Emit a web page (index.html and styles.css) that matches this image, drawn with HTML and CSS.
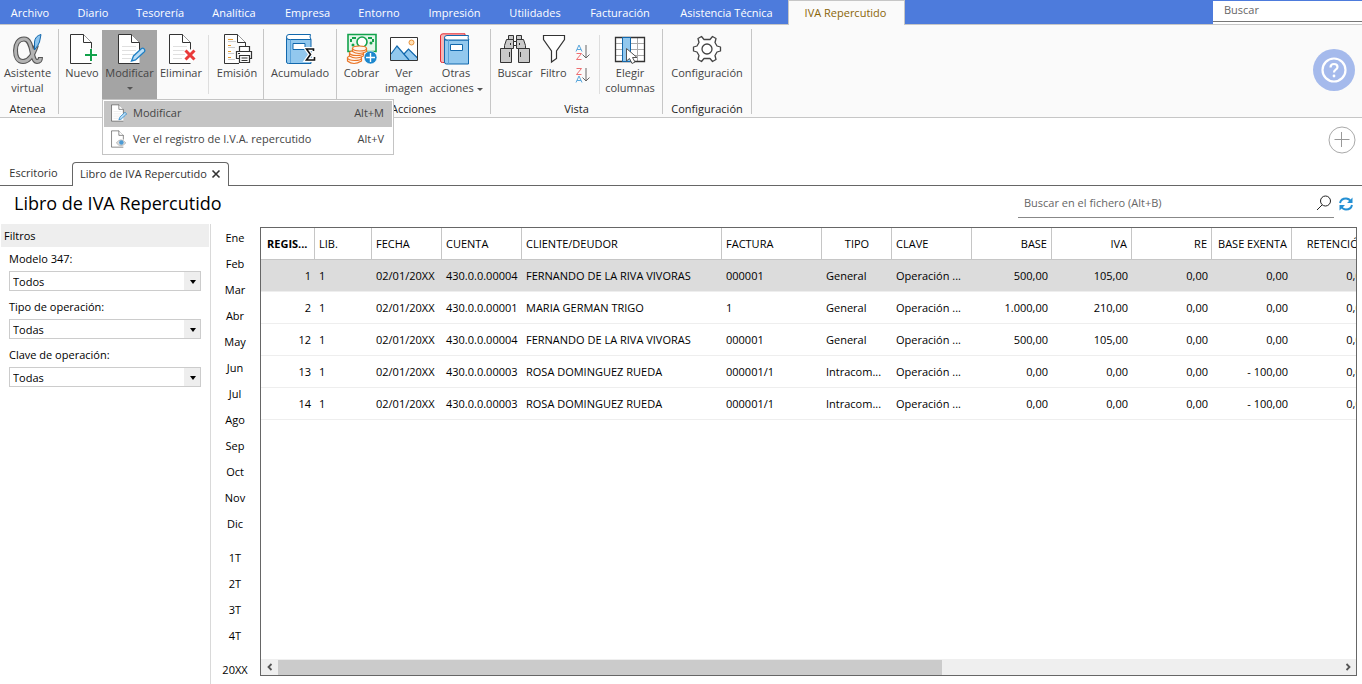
FILE: index.html
```html
<!DOCTYPE html>
<html lang="es">
<head>
<meta charset="utf-8">
<title>Libro de IVA Repercutido</title>
<link rel="stylesheet" href="styles.css">
</head>
<body>
<svg class="defs" aria-hidden="true">
  <symbol id="page" viewBox="0 0 32 32"><path d="M4.500 1.500H17.500L25.500 9.500V30.500H4.500Z" fill="#fff"/><path d="M25.500 17V9.500L17.500 1.500H4.500V30.500H25.500" fill="none" stroke="#333"/><path d="M17.500 1.500V9.500H25.500" fill="#fff" stroke="#333"/></symbol>
  <symbol id="lines" viewBox="0 0 32 32"><path d="M8 13.500H22M8 17.500H22M8 21.500H20M8 25.500H17" stroke="#e0e0e0"/></symbol>
  <symbol id="pen" viewBox="0 0 32 32"><path d="M17.500 28l2-5 8-7.500q2-1 3 1t-1 3l-8 7.500z" fill="#b9dcf5" stroke="#1d7fc4" stroke-width="1.300"/></symbol>
</svg>
<header>
  <nav class="tabs" aria-label="Cinta">
    <button>Archivo</button><button>Diario</button><button>Tesorería</button><button>Analítica</button><button>Empresa</button><button>Entorno</button><button>Impresión</button><button>Utilidades</button><button>Facturación</button><button>Asistencia Técnica</button><button class="active">IVA Repercutido</button>
    <input class="top-search" type="search" placeholder="Buscar" aria-label="Buscar">
  </nav>
  <div class="ribbon">
    <section class="group g-atenea">
      <div class="tools">
        <button class="tool"><svg viewBox="0 0 32 32"><g fill="none"><path d="M24.500 12C21 23 17 28.500 11 28.500C6 28.500 3.500 24 3.500 17.500S6.500 6 12 6C18 6 19 14 20.500 21Q22 28.500 25 28.500Q28.500 28.500 28.500 24" stroke="#555" stroke-width="5"/><path d="M24.500 12C21 23 17 28.500 11 28.500C6 28.500 3.500 24 3.500 17.500S6.500 6 12 6C18 6 19 14 20.500 21Q22 28.500 25 28.500Q28.500 28.500 28.500 25" stroke="#b3b3b3" stroke-width="2.800"/></g><path d="M22.500 17V9Q23 3 29 1.500L27.500 9Q26.500 12 22.500 17z" fill="#8cc4ee" stroke="#1268ad"/></svg><span>Asistente virtual</span></button>
      </div>
      <h2>Atenea</h2>
    </section>
    <section class="group g-edit">
      <div class="tools">
        <button class="tool"><svg viewBox="0 0 32 32"><use href="#page"/><path d="M18 22H31M25 15.500V28.500" stroke="#fff" stroke-width="4"/><path d="M19 22H31M25 16V28" stroke="#12a24b" stroke-width="2"/></svg><span>Nuevo</span></button>
        <div class="drop">
          <button class="tool pressed" aria-expanded="true"><svg viewBox="0 0 32 32"><use href="#page"/><use href="#lines"/><use href="#pen"/></svg><span>Modificar</span><i class="caret"></i></button>
          <div class="menu" role="menu">
            <button role="menuitem" class="current"><svg viewBox="0 0 32 32"><use href="#page"/><use href="#lines"/><use href="#pen"/></svg><span>Modificar</span><kbd>Alt+M</kbd></button>
            <button role="menuitem"><svg viewBox="0 0 32 32"><use href="#page"/><path d="M13 23q8-11 17 0-9 10-17 0z" fill="#ddd" stroke="#999"/><circle cx="22" cy="22" r="4" fill="#4c9bd5"/></svg><span>Ver el registro de I.V.A. repercutido</span><kbd>Alt+V</kbd></button>
          </div>
        </div>
        <button class="tool"><svg viewBox="0 0 32 32"><use href="#page"/><use href="#lines"/><path d="M20 17l9 10M29 17l-9 10" stroke="#fff" stroke-width="6"/><path d="M20.500 17.500l9 9M29.500 17.500l-9 9" stroke="#e93a3a" stroke-width="3"/></svg><span>Eliminar</span></button>
        <i class="rule"></i>
        <button class="tool"><svg viewBox="0 0 32 32"><path d="M3.500 1.500H16.500L24.500 9.500V13M3.500 1.500V30.500H18" fill="#fff" stroke="#333"/><path d="M16.500 1.500V9.500H24.500" fill="#fff" stroke="#333"/><path d="M7 6.500h5M7 12.500h3M7 18.500h3M7 24.500h3" stroke="#e69a2e"/><path d="M7 8.500h8M7 14.500h7M7 20.500h6M7 26.500h7" stroke="#ccc"/><g fill="#fff" stroke="#333" stroke-width="1.200"><path d="M18.500 18v-4.500h10V18"/><path d="M15.500 18.500h15v7h-15z"/><path d="M18.500 22.500h10v7h-10z"/><path d="M20.500 25h6M20.500 27.500h6M17 20.500h2"/></g></svg><span>Emisión</span></button>
      </div>
    </section>
    <section class="group g-sum">
      <div class="tools">
        <button class="tool"><svg viewBox="0 0 32 32"><path d="M2.500 4V29q0 1.500 2 1.500H27V6.500H4Z" fill="#92c8ee" stroke="#1268ad"/><path d="M26.500 1.500H5q-2.500 0-2.500 2.500T5 6.500H27l-1-2.500z" fill="#fff" stroke="#1268ad"/><path d="M6.500 6.500V30" stroke="#5ba3da"/><path d="M9 10.500H21V16.500H9z" fill="#fff" stroke="#1268ad"/><path d="M29.500 18V16H22.500l4 5.500-4 5.500h8v-3" fill="none" stroke="#fff" stroke-width="4"/><path d="M29.500 18V16H22.500l4 5.500-4 5.500h8v-3" fill="none" stroke="#111" stroke-width="1.600"/></svg><span>Acumulado</span></button>
      </div>
    </section>
    <section class="group g-actions">
      <div class="tools">
        <button class="tool"><svg viewBox="0 0 32 32"><path d="M2 1.500H30V18.500H2z" fill="#e5f6ea" stroke="#12a24b" stroke-width="1.600"/><path d="M6 5h4M5 6v3M22 5h4M27 6v3" stroke="#12a24b" stroke-width="2"/><circle cx="16" cy="9" r="5" fill="#fff" stroke="#12a24b" stroke-width="1.600"/><circle cx="7" cy="12" r="1.500" fill="#12a24b"/><circle cx="25" cy="10" r="1.500" fill="#12a24b"/><g fill="#fff4ec" stroke="#ea7527" stroke-width="1.200"><path d="M1.500 25v3q6 5 14 0v-3z"/><ellipse cx="8.500" cy="25" rx="7" ry="2.500"/><path d="M3.500 20v3q6 4 14 0v-3z"/><ellipse cx="10.500" cy="20" rx="7" ry="2.500"/><path d="M6.500 15.500v3q6 4 14 0v-3z"/><ellipse cx="13.500" cy="15.500" rx="7" ry="2.500"/></g><circle cx="24.500" cy="24.500" r="6.500" fill="#1c87cd" stroke="#fff" stroke-width=".6"/><path d="M20 24.500h9M24.500 20v9" stroke="#fff" stroke-width="1.400"/></svg><span>Cobrar</span></button>
        <button class="tool"><svg viewBox="0 0 32 32"><path d="M2.500 4.500H29.500V27.500H2.500z" fill="#fff"/><path d="M3 21l6-8 7 8 4.500-5L29 24v3H3z" fill="#92c8ee"/><path d="M3 21l6-8 12 14M16 21l4.500-5 9 9" fill="none" stroke="#1268ad" stroke-width="1.200"/><circle cx="23.500" cy="9.500" r="2.500" fill="#ffe0b5" stroke="#e8913a"/><path d="M2.500 4.500H29.500V27.500H2.500z" fill="none" stroke="#333"/></svg><span>Ver imagen</span></button>
        <button class="tool"><svg viewBox="0 0 32 32"><path d="M.5 3V28q0 1.500 2 1.500H5V5H25V.8H3Q.5.8.5 3z" fill="#f5b5b5" stroke="#e52e36"/><path d="M4.500 4V29q0 2 2 2H28.500V7H5z" fill="#92c8ee" stroke="#1268ad"/><path d="M28.500 2.500H7Q4.500 2.500 4.500 4.700T7 7H29l-1-2z" fill="#fff" stroke="#1268ad"/><path d="M8.500 7V31" stroke="#5ba3da"/><path d="M10.500 11.500H22.500V17.500H10.500z" fill="#fff" stroke="#1268ad"/></svg><span>Otras acciones <i class="caret"></i></span></button>
      </div>
      <h2>Acciones</h2>
    </section>
    <section class="group g-view">
      <div class="tools">
        <button class="tool"><svg viewBox="0 0 32 32"><g fill="#c9c9c9" stroke="#333"><path d="M9.500 2.500h5v4h-5zM17.500 2.500h5v4h-5z"/><path d="M7.500 6.500h7v9h-9v-3zM17.500 6.500h7l2 6v3h-9z"/><path d="M14.500 8.500h3v4h-3z" fill="#fff"/><path d="M1.500 15.500h11v14H1.500zM19.500 15.500h11v14h-11z"/><path d="M10.500 19v5M21.500 19v5M11.500 10v2M20.500 10v2"/></g></svg><span>Buscar</span></button>
        <button class="tool"><svg viewBox="0 0 32 32"><path d="M5.500 2.500H26.500V6.500L18.500 18V25.500L13.500 29V18L5.500 6.500z" fill="#fff" stroke="#333" stroke-width="1.200"/></svg><span>Filtro</span></button>
        <div class="sorts">
          <button aria-label="Orden ascendente"><svg viewBox="0 0 16 18"><path d="M1 7.500L4 1l3 6.500M2 5.500h4" fill="none" stroke="#5aa7dc"/><path d="M1.500 9.500h5L1.500 15.500h5" fill="none" stroke="#ee6d70"/><path d="M11 1V14M7.500 10.500L11 14l3.500-3.500" fill="none" stroke="#666"/></svg></button>
          <button aria-label="Orden descendente"><svg viewBox="0 0 16 18"><path d="M1.500 1.500h5L1.500 7.500h5" fill="none" stroke="#ee6d70"/><path d="M1 15.500L4 9l3 6.500M2 13.500h4" fill="none" stroke="#5aa7dc"/><path d="M11 1V14M7.500 10.500L11 14l3.500-3.500" fill="none" stroke="#666"/></svg></button>
        </div>
        <i class="rule"></i>
        <button class="tool"><svg viewBox="0 0 32 32"><path d="M1.500 4.500H30.500V28.500H1.500z" fill="#fff"/><path d="M2 10.500H30M2 16.500H30M2 22.500H30M16.500 5V28M23.500 5V28" stroke="#aaa"/><path d="M1.500 4.500H30.500V28.500H1.500z" fill="none" stroke="#333" stroke-width="1.300"/><path d="M8.500 4.500h8v24h-8z" fill="#92c8ee" stroke="#1268ad"/><path d="M12.500 15.500V28l3-2.500 2.500 5 3-1.500-2.500-4.500h4.500z" fill="#fff" stroke="#555"/></svg><span>Elegir columnas</span></button>
      </div>
      <h2>Vista</h2>
    </section>
    <section class="group g-config">
      <div class="tools">
        <button class="tool"><svg viewBox="0 0 32 32"><g fill="#fff" stroke="#444" stroke-width="1.300" stroke-linejoin="round"><path d="M13 6.500L10.500 3.500 7 5.500 8 9.500 6 13 2.500 14v4L6 19 8 22.500 7 26.500l3.500 2L13 25.500h6l2.500 3 3.500-2-1-4L26 19l3.500-1v-4L26 13l-2-3.500 1-4-3.500-2L19 6.500z"/><circle cx="16" cy="16" r="5"/></g></svg><span>Configuración</span></button>
      </div>
      <h2>Configuración</h2>
    </section>
    <button class="help" aria-label="Ayuda"><svg viewBox="0 0 42 42"><circle cx="21" cy="21" r="21" fill="#a5baec"/><circle cx="21" cy="21" r="11.500" fill="none" stroke="#fff" stroke-width="2.200"/><path d="M17.500 18.500q0-3.500 3.500-3.500t3.500 3q0 1.800-2 2.800-1.500 1-1.500 2.700" fill="none" stroke="#fff" stroke-width="2.200"/><circle cx="21" cy="27" r="1.400" fill="#fff"/></svg></button>
  </div>
</header>
<div class="add-row"><button aria-label="Añadir"><svg viewBox="0 0 28 28"><circle cx="14" cy="14" r="13" fill="none" stroke="#aaa"/><path d="M6.500 13.500h15M13.500 6v15" stroke="#999"/></svg></button></div>
<nav class="doc-tabs" aria-label="Documentos">
  <button>Escritorio</button>
  <button class="active">Libro de IVA Repercutido <svg viewBox="0 0 10 10"><path d="M1.500 1.500l7 7M8.500 1.500l-7 7" stroke="#333" stroke-width="1.600"/></svg></button>
</nav>
<div class="title-row">
  <h1>Libro de IVA Repercutido</h1>
  <div class="file-search"><input type="search" placeholder="Buscar en el fichero (Alt+B)" aria-label="Buscar en el fichero"><button aria-label="Buscar"><svg viewBox="0 0 16 16"><circle cx="9.500" cy="6" r="5" fill="none" stroke="#222"/><path d="M6 10L1 15" stroke="#222"/></svg></button></div>
  <button class="refresh" aria-label="Actualizar"><svg viewBox="0 0 16 16"><path d="M2 7q1-4.500 6-4.500 3 0 5 3M14 9q-1 4.500-6 4.500-3 0-5-3" fill="none" stroke="#2590d4" stroke-width="2"/><path d="M14.500 1.500V7H9zM1.500 14.500V9H7z" fill="#2590d4"/></svg></button>
</div>
<main>
  <aside class="filters">
    <h2>Filtros</h2>
    <label for="f1">Modelo 347:</label>
    <div class="pick"><select id="f1"><option>Todos</option></select></div>
    <label for="f2">Tipo de operación:</label>
    <div class="pick"><select id="f2"><option>Todas</option></select></div>
    <label for="f3">Clave de operación:</label>
    <div class="pick"><select id="f3"><option>Todas</option></select></div>
  </aside>
  <nav class="periods" aria-label="Periodo">
    <button>Ene</button><button>Feb</button><button>Mar</button><button>Abr</button><button>May</button><button>Jun</button><button>Jul</button><button>Ago</button><button>Sep</button><button>Oct</button><button>Nov</button><button>Dic</button>
    <button class="first">1T</button><button>2T</button><button>3T</button><button>4T</button>
    <button class="first">20XX</button>
  </nav>
  <div class="grid">
    <div class="viewport">
      <table>
        <colgroup><col class="w54"><col class="w57"><col class="w70"><col class="w80"><col class="w200"><col class="w100"><col class="w70"><col class="w80"><col class="w80"><col class="w80"><col class="w80"><col class="w80"><col class="w80"></colgroup>
        <thead><tr><th class="key">REGIS...</th><th>LIB.</th><th>FECHA</th><th>CUENTA</th><th>CLIENTE/DEUDOR</th><th>FACTURA</th><th class="mid">TIPO</th><th>CLAVE</th><th class="num">BASE</th><th class="num">IVA</th><th class="num">RE</th><th class="num">BASE EXENTA</th><th class="num">RETENCIÓN</th></tr></thead>
        <tbody>
          <tr class="selected"><td class="num">1</td><td>1</td><td>02/01/20XX</td><td>430.0.0.00004</td><td>FERNANDO DE LA RIVA VIVORAS</td><td>000001</td><td>General</td><td>Operación ...</td><td class="num">500,00</td><td class="num">105,00</td><td class="num">0,00</td><td class="num">0,00</td><td class="num">0,00</td></tr>
          <tr><td class="num">2</td><td>1</td><td>02/01/20XX</td><td>430.0.0.00001</td><td>MARIA GERMAN TRIGO</td><td>1</td><td>General</td><td>Operación ...</td><td class="num">1.000,00</td><td class="num">210,00</td><td class="num">0,00</td><td class="num">0,00</td><td class="num">0,00</td></tr>
          <tr><td class="num">12</td><td>1</td><td>02/01/20XX</td><td>430.0.0.00004</td><td>FERNANDO DE LA RIVA VIVORAS</td><td>000001</td><td>General</td><td>Operación ...</td><td class="num">500,00</td><td class="num">105,00</td><td class="num">0,00</td><td class="num">0,00</td><td class="num">0,00</td></tr>
          <tr><td class="num">13</td><td>1</td><td>02/01/20XX</td><td>430.0.0.00003</td><td>ROSA DOMINGUEZ RUEDA</td><td>000001/1</td><td>Intracom...</td><td>Operación ...</td><td class="num">0,00</td><td class="num">0,00</td><td class="num">0,00</td><td class="num">- 100,00</td><td class="num">0,00</td></tr>
          <tr><td class="num">14</td><td>1</td><td>02/01/20XX</td><td>430.0.0.00003</td><td>ROSA DOMINGUEZ RUEDA</td><td>000001/1</td><td>Intracom...</td><td>Operación ...</td><td class="num">0,00</td><td class="num">0,00</td><td class="num">0,00</td><td class="num">- 100,00</td><td class="num">0,00</td></tr>
        </tbody>
      </table>
    </div>
    <div class="scroll">
      <button aria-label="Desplazar a la izquierda"><svg viewBox="0 0 8 8"><path d="M5.500 1L2.500 4l3 3" fill="none" stroke="#555" stroke-width="1.800"/></svg></button>
      <div class="track"><div class="thumb"></div></div>
      <button aria-label="Desplazar a la derecha"><svg viewBox="0 0 8 8"><path d="M2.500 1l3 3-3 3" fill="none" stroke="#555" stroke-width="1.800"/></svg></button>
    </div>
  </div>
</main>
</body>
</html>
```
FILE: styles.css
```css
* { box-sizing: border-box; }
body {
  margin: 0;
  min-height: 100vh;
  display: flex;
  flex-direction: column;
  background: #fff;
  color: #000;
  font: 11px/15px "Open Sans", "Noto Sans", sans-serif;
}
button, input, select { font: inherit; color: inherit; }
button { border: 0; padding: 0; background: none; white-space: nowrap; }
h1, h2 { margin: 0; font-size: 11px; font-weight: 400; }
input { border: 0; outline: 0; min-width: 0; }
svg { display: block; }
.defs { display: none; }

.tabs {
  display: grid;
  grid-template-columns: 63px 60px 74px 74px 73px 70px 81px 80px 90px 123px 117px 1fr;
  height: 25px;
  background: #4d7bdc;
  color: #fff;
  border-bottom: 1px solid #c6c6c6;
}
.tabs button:first-child { padding-right: 3px; }
.tabs button.active {
  height: 25px;
  padding: 0 2px 2px 0;
  background: #fafafa;
  color: #8a6508;
  border: 1px solid #c6c6c6;
  border-bottom: 0;
}
.top-search {
  justify-self: end;
  width: 149px;
  height: 21px;
  margin-top: 1px;
  padding: 0 11px 4px;
  background: #fff;
  border-bottom: 1px solid #777;
  box-shadow: 0 2px #fff;
}
.top-search::placeholder, .file-search input::placeholder { color: #666; opacity: 1; }

.ribbon {
  display: flex;
  height: 93px;
  padding-top: 4px;
  background: #fafafa;
  border-bottom: 1px solid #c6c6c6;
  color: #444;
}
.group {
  display: flex;
  flex-direction: column;
  height: 85px;
  border-right: 1px solid #c6c6c6;
}
.group h2 { margin-top: 1px; text-align: center; color: #222; }
.tools { display: grid; height: 71px; padding-top: 1px; }
.tool {
  display: flex;
  flex-direction: column;
  align-items: center;
  width: 100%;
  height: 70px;
  padding-top: 3px;
}
.tool > svg { width: 32px; height: 32px; }
.tool span { white-space: normal; }
.g-atenea { width: 59px; padding-right: 3px; }
.g-edit { width: 205px; }
.g-edit .tools { grid-template-columns: 40px 55px 48px 9px 46px; padding-left: 3px; }
.g-sum { width: 73px; }
.g-actions { width: 154px; }
.g-actions .tools { grid-template-columns: 43px 42px 62px; padding-left: 3px; }
.g-view { width: 172px; }
.g-view .tools { grid-template-columns: 40px 37px 24px 4px 60px; padding-left: 4px; }
.g-config { width: 89px; }
.rule { width: 1px; height: 59px; margin: 5px auto 0 3px; background: #dedede; }
.caret {
  display: inline-block;
  border: 3px solid transparent;
  border-top-color: #555;
  border-bottom: 0;
  vertical-align: middle;
}
.tool > .caret { margin-top: 7px; }
.pressed { background: #a4a4a4; }
.sorts { display: flex; flex-direction: column; gap: 5px; padding: 14px 0 0 3px; }
.sorts svg { width: 16px; height: 18px; }
.help { margin: 20px 7px 0 auto; width: 42px; height: 42px; }

.drop { position: relative; }
.menu {
  position: absolute;
  z-index: 2;
  top: 69px;
  left: 0;
  width: 292px;
  padding: 1px 1px 1px;
  background: #fff;
  border: 1px solid #c4c4c4;
}
.menu button {
  display: grid;
  grid-template-columns: 18px 1fr auto;
  align-items: center;
  gap: 6px;
  width: 100%;
  height: 26px;
  padding: 0 8px 3px 5px;
  text-align: left;
}
.menu .current { background: #c4c4c4; }
.menu svg { width: 18px; height: 18px; }
.menu kbd { font: inherit; }

.add-row { display: flex; justify-content: flex-end; padding: 8px 6px 8px 0; }
.add-row svg { width: 28px; height: 28px; }
.doc-tabs {
  display: flex;
  height: 24px;
  border-bottom: 1px solid #666;
  color: #333;
}
.doc-tabs button { width: 67px; margin-right: 5px; padding-bottom: 2px; }
.doc-tabs .active {
  display: flex;
  align-items: center;
  justify-content: center;
  gap: 4px;
  width: 157px;
  height: 24px;
  margin: 0;
  background: #fff;
  border: 1px solid #666;
  border-bottom: 0;
  border-radius: 4px 4px 0 0;
}
.doc-tabs svg { width: 10px; height: 10px; }

.title-row { display: flex; align-items: flex-start; height: 38px; padding: 0 8px 0 14px; }
h1 { font-size: 18px; line-height: 34px; flex: 1; }
.file-search { display: flex; width: 316px; height: 32px; border-bottom: 1px solid #888; }
.file-search input { flex: 1; padding: 2px 6px 0; background: none; }
.file-search svg { width: 16px; height: 16px; margin: 3px 2px 0 0; }
.refresh { margin: 10px 0 0 4px; }
.refresh svg { width: 16px; height: 16px; }

main { display: flex; flex: 1; }
.filters { width: 211px; border-right: 1px solid #d9d9d9; padding-left: 1px; }
.filters h2 { margin-right: 1px; padding: 4px 3px; background: #eee; }
.filters label { display: block; margin: 4px 8px 5px; }
.pick { position: relative; margin: 0 9px 8px 8px; }
.pick::after {
  content: "";
  position: absolute;
  top: 9px;
  right: 5px;
  border: 3px solid transparent;
  border-top: 4px solid #000;
  border-bottom: 0;
  pointer-events: none;
}
.pick select {
  display: block;
  appearance: none;
  width: 100%;
  height: 20px;
  padding: 0 3px;
  border: 1px solid #ccc;
  border-radius: 0;
  background: linear-gradient(#eee, #eee) right / 16px 100% no-repeat #fff;
}
.periods { display: flex; flex-direction: column; width: 49px; padding-right: 1px; }
.periods button { height: 26px; }
.periods .first { margin-top: 8px; }

.grid {
  display: flex;
  flex-direction: column;
  flex: 1;
  min-width: 0;
  margin: 3px 5px 8px 0;
  border: 1px solid #666;
}
.viewport { flex: 1; overflow: hidden; }
table { table-layout: fixed; width: 1111px; border-collapse: separate; border-spacing: 0; }
.w54 { width: 54px; }
.w57 { width: 57px; }
.w70 { width: 70px; }
.w80 { width: 80px; }
.w100 { width: 100px; }
.w200 { width: 200px; }
th, td {
  height: 32px;
  padding: 0 3px 0 4px;
  white-space: nowrap;
  text-align: left;
  font-weight: 400;
  border-bottom: 1px solid #eee;
}
th { border-bottom-color: #c6c6c6; border-right: 1px solid #c6c6c6; }
th.key { padding-left: 6px; font-weight: 700; }
th.num, td.num { padding-right: 4px; text-align: right; }
th.mid { text-align: center; }
.selected td { background: #dcdcdc; }

.scroll { display: flex; align-items: center; height: 16px; background: #efefef; }
.scroll button { display: grid; place-items: center; width: 17px; height: 16px; }
.scroll svg { width: 8px; height: 8px; }
.track { flex: 1; height: 15px; }
.thumb { width: 62.6%; height: 15px; background: #cbcbcb; }
```
